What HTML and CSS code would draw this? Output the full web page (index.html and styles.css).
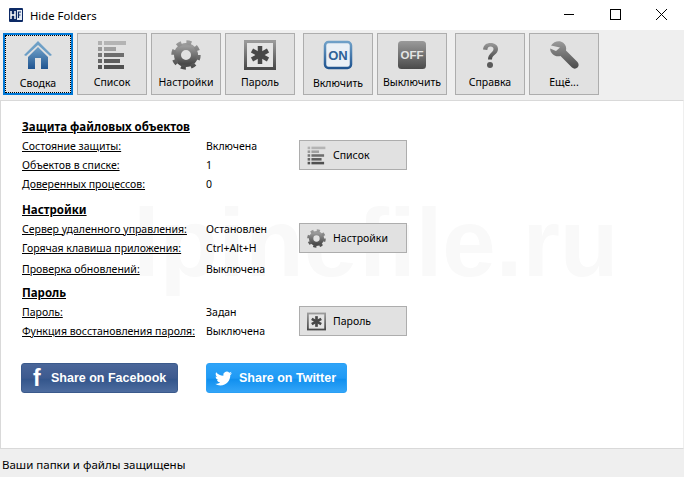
FILE: index.html
```html
<!DOCTYPE html>
<html lang="en">
<head>
    <meta charset="UTF-8">
    <title>Hide Folders</title>
    <link rel="stylesheet" href="styles.css">
</head>
<body>
<svg class="defs" width="0" height="0">
    <defs>
        <linearGradient id="blueGrad" x1="0" y1="0" x2="0" y2="1">
            <stop offset="0" stop-color="#6fa0c8"/>
            <stop offset="1" stop-color="#1f5490"/>
        </linearGradient>
        <linearGradient id="greyGrad" x1="0" y1="0" x2="0" y2="1">
            <stop offset="0" stop-color="#9a9a9a"/>
            <stop offset="1" stop-color="#4a4a4a"/>
        </linearGradient>
        <symbol id="iconList" viewBox="0 0 30 30">
            <rect x="1" y="1" width="4" height="4" fill="#b0b0b0"/><rect x="7" y="1" width="22" height="4" fill="#b4b4b4"/>
            <rect x="1" y="7" width="4" height="4" fill="#999"/><rect x="7" y="7" width="12" height="4" fill="#a0a0a0"/>
            <rect x="1" y="13" width="4" height="4" fill="#777"/><rect x="7" y="13" width="20" height="4" fill="#6e6e6e"/>
            <rect x="1" y="19" width="4" height="4" fill="#666"/><rect x="7" y="19" width="16" height="4" fill="#5e5e5e"/>
            <rect x="1" y="25" width="4" height="4" fill="#555"/><rect x="7" y="25" width="20" height="4" fill="#505050"/>
        </symbol>
        <symbol id="iconGear" viewBox="0 0 30 30">
            <circle cx="15" cy="15" r="8.500" fill="none" stroke="url(#greyGrad)" stroke-width="7"/>
            <circle cx="15" cy="15" r="12.600" fill="none" stroke="url(#greyGrad)" stroke-width="4.200" stroke-dasharray="4.900 5"/>
        </symbol>
        <symbol id="iconStar" viewBox="0 0 32 30">
            <rect x="1.500" y="1.500" width="29" height="27" fill="#e4e4e4" stroke="url(#greyGrad)" stroke-width="3"/>
            <g stroke="#484848" stroke-width="4.500">
                <path d="M16 6v18"/><path d="M8 10.500l16 9"/><path d="M24 10.500l-16 9"/>
            </g>
        </symbol>
    </defs>
</svg>

<div class="titlebar">
    <svg class="app-icon" viewBox="0 0 14 14">
        <rect width="14" height="14" rx="1" fill="#0d2a66"/>
        <path d="M2 3v8M6 3v8M2 7h4" stroke="#fff" stroke-width="1.500" fill="none"/>
        <rect x="8" y="2" width="5" height="10" fill="#e8eef6"/>
        <path d="M12 4h-2.500v6M9.500 7h2" stroke="#0d2a66" stroke-width="1.200" fill="none"/>
    </svg>
    <span class="app-title">Hide Folders</span>
    <div class="win-controls">
        <svg viewBox="0 0 46 30"><path d="M18 14.500h10" stroke="#000"/></svg>
        <svg viewBox="0 0 46 30"><rect x="18.500" y="9.500" width="10" height="10" fill="none" stroke="#000"/></svg>
        <svg viewBox="0 0 46 30"><path d="M18 9l11 11M29 9l-11 11" stroke="#000" fill="none"/></svg>
    </div>
</div>

<div class="toolbar">
    <button class="tool-btn active">
        <svg class="tool-icon" viewBox="0 0 30 30">
            <path d="M1 15L15 1l14 14-2 1L15 5 3 16z" fill="#6d9fc6"/>
            <path d="M5 17L15 7l10 10v12h-7V18h-6v11H5z" fill="url(#blueGrad)"/>
        </svg>
        <span class="tool-label">Сводка</span>
    </button>
    <button class="tool-btn">
        <svg class="tool-icon"><use href="#iconList"/></svg>
        <span class="tool-label up">Список</span>
    </button>
    <button class="tool-btn">
        <svg class="tool-icon"><use href="#iconGear"/></svg>
        <span class="tool-label up">Настройки</span>
    </button>
    <button class="tool-btn">
        <svg class="tool-icon wide"><use href="#iconStar"/></svg>
        <span class="tool-label up">Пароль</span>
    </button>
    <button class="tool-btn group-start">
        <svg class="tool-icon" viewBox="0 0 30 30">
            <rect x="2" y="2" width="26" height="26" rx="3.500" fill="#eaf0f6" stroke="url(#blueGrad)" stroke-width="2.500"/>
            <text x="15" y="20" class="icon-text on">ON</text>
        </svg>
        <span class="tool-label">Включить</span>
    </button>
    <button class="tool-btn">
        <svg class="tool-icon" viewBox="0 0 30 30">
            <rect x="1" y="1" width="28" height="28" rx="3.500" fill="url(#greyGrad)"/>
            <text x="15" y="19" class="icon-text off">OFF</text>
        </svg>
        <span class="tool-label up">Выключить</span>
    </button>
    <button class="tool-btn group-start">
        <svg class="tool-icon" viewBox="0 0 30 30">
            <path d="M8 9.500C8.500 5 11.500 3 15.500 3c4.500 0 7.500 2.500 7.500 6 0 5.500-6 5.500-6 10.500h-4c0-6 5.500-7 5.500-10.500 0-1.500-1-2.500-3-2.500-1.800 0-3 1-3.200 3.500z" fill="url(#greyGrad)"/>
            <circle cx="15" cy="25" r="3" fill="#5a5a5a"/>
        </svg>
        <span class="tool-label up">Справка</span>
    </button>
    <button class="tool-btn">
        <svg class="tool-icon" viewBox="0 0 30 30">
            <path d="M2 5.500C5 1 11 0 14.500 3c2.500 2 3 5 2.500 7.500L28.500 22c1.500 2 1.500 4 0 5.500s-4 1.500-5.500 0L11.500 16c-3 .8-6 0-8-2-1.500-1.500-2.500-3.500-2.300-5.500L7 11l4-3.500z" fill="url(#greyGrad)"/>
        </svg>
        <span class="tool-label up">Ещё...</span>
    </button>
</div>

<div class="content">
    <div class="watermark">lpinefile.ru</div>

    <section class="block">
        <div class="info">
            <h3>Защита файловых объектов</h3>
            <a>Состояние защиты:</a><span>Включена</span>
            <a>Объектов в списке:</a><span>1</span>
            <a>Доверенных процессов:</a><span>0</span>
        </div>
        <button class="side-btn">
            <svg class="side-icon"><use href="#iconList"/></svg>Список
        </button>
    </section>

    <section class="block">
        <div class="info">
            <h3>Настройки</h3>
            <a>Сервер удаленного управления:</a><span>Остановлен</span>
            <a>Горячая клавиша приложения:</a><span>Ctrl+Alt+H</span>
            <a class="low">Проверка обновлений:</a><span class="low">Выключена</span>
        </div>
        <button class="side-btn">
            <svg class="side-icon"><use href="#iconGear"/></svg>Настройки
        </button>
    </section>

    <section class="block">
        <div class="info">
            <h3>Пароль</h3>
            <a>Пароль:</a><span>Задан</span>
            <a>Функция восстановления пароля:</a><span>Выключена</span>
        </div>
        <button class="side-btn">
            <svg class="side-icon"><use href="#iconStar"/></svg>Пароль
        </button>
    </section>

    <div class="share-row">
        <div class="share fb"><span class="fb-f">f</span>Share on Facebook</div>
        <div class="share tw">
            <svg class="tw-bird" viewBox="0 0 24 24"><path fill="#fff" d="M23.953 4.570a10 10 0 01-2.825.775 4.958 4.958 0 002.163-2.723c-.951.555-2.005.959-3.127 1.184a4.920 4.920 0 00-8.384 4.482C7.690 8.095 4.067 6.130 1.640 3.162a4.822 4.822 0 00-.666 2.475c0 1.710.870 3.213 2.188 4.096a4.904 4.904 0 01-2.228-.616v.060a4.923 4.923 0 003.946 4.827 4.996 4.996 0 01-2.212.085 4.936 4.936 0 004.604 3.417 9.867 9.867 0 01-6.102 2.105c-.390 0-.779-.023-1.170-.067a13.995 13.995 0 007.557 2.209c9.053 0 13.998-7.496 13.998-13.985 0-.210 0-.420-.015-.630A9.935 9.935 0 0024 4.590z"/></svg>
            Share on Twitter
        </div>
    </div>
</div>

<div class="statusbar">Ваши папки и файлы защищены</div>
</body>
</html>
```

FILE: styles.css
```css
html, body {
    margin: 0;
    padding: 0;
    height: 100%;
}

body {
    width: 684px;
    height: 477px;
    overflow: hidden;
    display: flex;
    flex-direction: column;
    background: #fff;
    color: #000;
    font-family: "Noto Sans", "Liberation Sans", sans-serif;
    font-size: 10.500px;
}

.defs {
    position: absolute;
}

/* Title bar */
.titlebar {
    height: 30px;
    flex: none;
    display: flex;
    align-items: center;
    padding-left: 9px;
    background: #fff;
}

.app-icon {
    width: 14px;
    height: 14px;
    margin-right: 7px;
}

.app-title {
    font-size: 11.300px;
}

.win-controls {
    margin-left: auto;
    display: flex;
}

.win-controls svg {
    width: 46px;
    height: 30px;
    display: block;
}

/* Toolbar */
.toolbar {
    height: 70px;
    flex: none;
    box-sizing: border-box;
    padding: 3px 3px 0;
    display: flex;
    align-items: flex-start;
    gap: 4px;
    background: #efefef;
}

.tool-btn {
    width: 70px;
    height: 62px;
    box-sizing: border-box;
    padding: 6px 0 0;
    display: flex;
    flex-direction: column;
    align-items: center;
    background: #e1e1e1;
    border: 1px solid #adadad;
    font: inherit;
    color: #000;
    position: relative;
}

.tool-btn.active {
    border: 2px solid #0078d7;
    padding-top: 5px;
}

.tool-btn.active::after {
    content: "";
    position: absolute;
    inset: 0;
    border: 1px dotted #000;
}

.tool-btn.group-start {
    margin-left: 4px;
}

.tool-icon {
    width: 30px;
    height: 30px;
    display: block;
}

.tool-icon.wide {
    width: 32px;
}

.tool-label {
    margin-top: 6px;
    line-height: 15px;
    white-space: nowrap;
}

.tool-label.up {
    margin-top: 5px;
}

.icon-text {
    font-family: "Liberation Sans", sans-serif;
    font-weight: bold;
    text-anchor: middle;
}

.icon-text.on {
    font-size: 13px;
    fill: #2f6297;
}

.icon-text.off {
    font-size: 11.500px;
    fill: #e4e4e4;
}

/* Main panel */
.content {
    flex: 1;
    position: relative;
    box-sizing: border-box;
    padding: 16px 0 0 20px;
    border: 1px solid #d9d9d9;
    border-right-color: #efefef;
    background: #fff;
    overflow: hidden;
}

.watermark {
    position: absolute;
    left: 132px;
    top: 92px;
    font-family: "Liberation Sans", sans-serif;
    font-size: 96px;
    font-weight: bold;
    line-height: 100px;
    color: #f9f9f9;
    white-space: nowrap;
}

.block {
    position: relative;
    display: flex;
    align-items: flex-start;
    margin-bottom: 7px;
}

.info {
    width: 278px;
    display: grid;
    grid-template-columns: 185px 1fr;
    grid-auto-rows: 19px;
    align-items: center;
}

.info h3 {
    grid-column: 1 / 3;
    margin: 0;
    padding-left: 1px;
    font-size: 11.500px;
    font-weight: bold;
    text-decoration: underline;
    white-space: nowrap;
}

.info a {
    padding-left: 1px;
    text-decoration: underline;
    white-space: nowrap;
}

.info .low {
    position: relative;
    top: 2px;
}

.side-btn {
    width: 108px;
    height: 30px;
    margin-top: 23px;
    box-sizing: border-box;
    padding: 0 0 0 7px;
    display: flex;
    align-items: center;
    background: #e1e1e1;
    border: 1px solid #adadad;
    font: inherit;
    color: #000;
}

.side-icon {
    width: 19px;
    height: 19px;
    margin-right: 7px;
}

/* Share buttons */
.share-row {
    display: flex;
    gap: 28px;
    margin-top: 23px;
}

.share {
    height: 30px;
    box-sizing: border-box;
    display: flex;
    align-items: center;
    border-radius: 3px;
    color: #fff;
    font-family: "Liberation Sans", sans-serif;
    font-size: 12.500px;
    font-weight: bold;
    white-space: nowrap;
}

.fb {
    width: 157px;
    padding-left: 11px;
    background: linear-gradient(#4a6699 0%, #3d5a8f 50%, #34568c 55%, #4d6c9f 100%);
    border: 1px solid #3b5a8c;
}

.fb-f {
    width: 18px;
    font-size: 23px;
    line-height: 28px;
}

.tw {
    width: 141px;
    padding-left: 8px;
    background: linear-gradient(#2fa4f8 0%, #209af5 50%, #1190ef 55%, #33a5f8 100%);
    border: 1px solid #2aa0f5;
}

.tw-bird {
    width: 17px;
    height: 17px;
    margin-right: 7px;
}

/* Status bar */
.statusbar {
    height: 28px;
    flex: none;
    box-sizing: border-box;
    padding: 7px 0 0 2px;
    background: #efefef;
    font-size: 11.500px;
    line-height: 18px;
}
```
